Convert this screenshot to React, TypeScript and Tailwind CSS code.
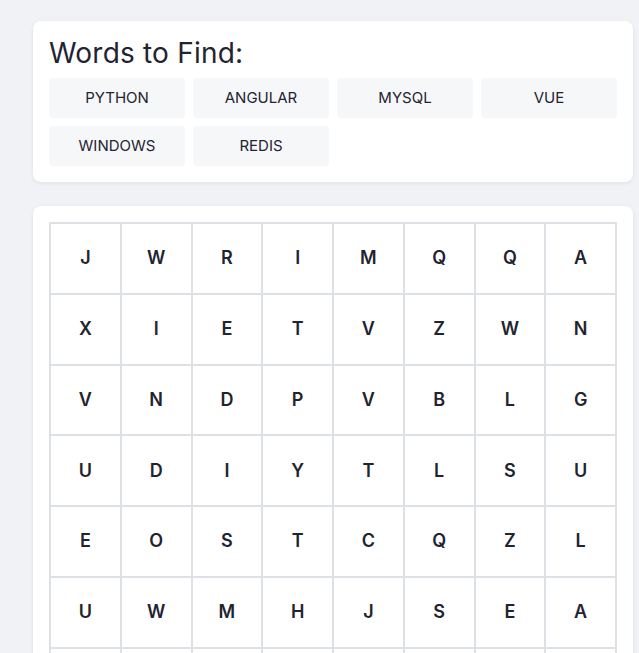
import React from 'react';

const words = ['PYTHON', 'ANGULAR', 'MYSQL', 'VUE', 'WINDOWS', 'REDIS'];

const grid: string[] = [
  'JWRIMQQA',
  'XIETVZWN',
  'VNDPVBLG',
  'UDIYTLSU',
  'EOSTCQZL',
  'UWMHJSEA',
  'PKRNQSYO',
  'HTLEOWIS',
];

export default function App() {
  return (
    <div className="min-h-[653px] bg-[#f0f2f5] pt-[21px] pl-[33px] pr-[6px] pb-6 font-['Inter','Noto_Sans',sans-serif] text-[#1f2430]">
      {/* Word list */}
      <div className="w-[600px] rounded-lg bg-white p-4 shadow-[0_1px_4px_rgba(0,0,0,0.08)]">
        <h2 className="mb-2 text-[28px] leading-[33px] font-normal tracking-[0.2px]">Words to Find:</h2>
        <div className="grid grid-cols-4 gap-2">
          {words.map((w) => (
            <div
              key={w}
              className="flex h-10 items-center justify-center rounded bg-[#f6f7f9] text-[15px] uppercase"
            >
              {w}
            </div>
          ))}
        </div>
      </div>

      {/* Letter grid */}
      <div className="mt-6 w-[600px] rounded-lg bg-white p-4 shadow-[0_1px_4px_rgba(0,0,0,0.08)]">
        <div className="grid grid-cols-8 gap-[2px] bg-[#dde0e5] p-[2px]">
          {grid.flatMap((row, r) =>
            row.split('').map((ch, c) => (
              <div
                key={`${r}-${c}`}
                className="flex aspect-square items-center justify-center bg-white text-lg font-semibold"
              >
                {ch}
              </div>
            ))
          )}
        </div>
      </div>
    </div>
  );
}
